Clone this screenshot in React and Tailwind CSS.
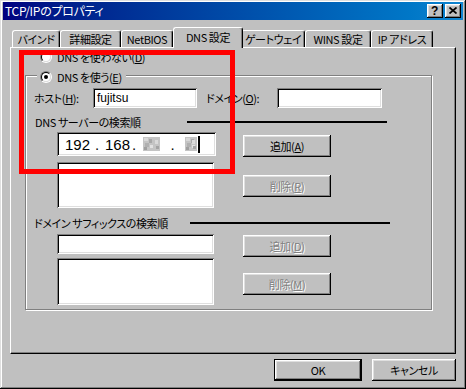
import React from "react";

const RAISED =
  "shadow-[inset_-1px_-1px_0_#000,inset_1px_1px_0_#fff,inset_-2px_-2px_0_#808080,inset_2px_2px_0_#dfdfdf]";
const SUNKEN =
  "shadow-[inset_1px_1px_0_#808080,inset_-1px_-1px_0_#fff,inset_2px_2px_0_#000,inset_-2px_-2px_0_#dfdfdf]";

function U({ children }) {
  return <span className="underline underline-offset-[1px]">{children}</span>;
}

function Radio({ checked }) {
  return (
    <div className="w-[12px] h-[12px] shrink-0 rounded-full border border-t-[#808080] border-l-[#808080] border-b-white border-r-white">
      <div className="w-full h-full rounded-full border border-t-black border-l-black border-b-[#dfdfdf] border-r-[#dfdfdf] bg-white flex items-center justify-center">
        {checked && <div className="w-[4px] h-[4px] rounded-full bg-black" />}
      </div>
    </div>
  );
}

function Btn({ children, disabled, className }) {
  return (
    <div
      className={
        "flex items-center justify-center bg-[#c0c0c0] leading-none " +
        RAISED +
        " " +
        (disabled
          ? "text-[#808080] [text-shadow:1px_1px_0_#fff] "
          : "text-black ") +
        className
      }
    >
      {children}
    </div>
  );
}

function Field({ className, children }) {
  return <div className={"bg-white " + SUNKEN + " " + className}>{children}</div>;
}

function Tab({ children, className }) {
  return (
    <div
      className={
        "h-[17px] bg-[#c0c0c0] border-l border-t border-r border-l-white border-t-white border-r-black rounded-t-[3px] shadow-[inset_-1px_0_0_#808080] flex items-center justify-center leading-none " +
        className
      }
    >
      {children}
    </div>
  );
}

function Mosaic({ w }) {
  return (
    <svg width={w} height="14" viewBox={`0 0 ${w} 14`} className="block">
      <rect x="0" y="0" width={w} height="14" fill="#c4c4c4" />
      <rect x="1" y="1" width="4" height="3" fill="#d8d8d8" />
      <rect x="6" y="2" width="3" height="4" fill="#a8a8a8" />
      <rect x="2" y="6" width="4" height="4" fill="#b0b0b0" />
      <rect x="7" y="8" width="3" height="3" fill="#e2e2e2" />
      <rect x="1" y="10" width="3" height="3" fill="#a0a0a0" />
      <rect x={w - 5} y="3" width="3" height="4" fill="#dadada" />
      <rect x={w - 4} y="9" width="3" height="3" fill="#a4a4a4" />
    </svg>
  );
}

export default function App() {
  return (
    <div
      className={
        "relative w-[466px] h-[389px] bg-[#c0c0c0] px-[3px] pt-[2px] flex flex-col text-black whitespace-nowrap font-['MS_UI_Gothic','Noto_Sans_CJK_JP',sans-serif] [font-feature-settings:'palt'] text-[11px] tracking-[-0.4px] leading-none overflow-hidden shadow-[inset_-1px_-1px_0_#000,inset_1px_1px_0_#dfdfdf,inset_-2px_-2px_0_#808080,inset_2px_2px_0_#fff]"
      }
    >
      {/* Title bar */}
      <div className="h-[18px] bg-linear-to-r from-[#000080] to-[#1084d0] flex items-center pl-[2px] pr-[2px]">
        <span className="text-white text-[12px] tracking-[-0.3px]">TCP/IPのプロパティ</span>
        <div className="ml-auto flex gap-[2px]">
          <div className={"w-[16px] h-[14px] bg-[#c0c0c0] flex items-center justify-center " + RAISED}>
            <span className="font-['Liberation_Sans',sans-serif] font-bold text-[12px] leading-none pr-[1px]">?</span>
          </div>
          <div className={"w-[16px] h-[14px] bg-[#c0c0c0] flex items-center justify-center " + RAISED}>
            <svg width="8" height="7" viewBox="0 0 8 7" className="block -mt-[1px]">
              <path d="M0.5 0.5L7.5 6.5M7.5 0.5L0.5 6.5" stroke="#000" strokeWidth="1.7" />
            </svg>
          </div>
        </div>
      </div>

      <div className="mx-[7px] mt-[7px] flex flex-col">
        {/* Tabs */}
        <div className="h-[20px] flex items-end pl-[2px]">
          <Tab className="w-[48px]">バインド</Tab>
          <Tab className="w-[61px]">詳細設定</Tab>
          <Tab className="w-[52px]">NetBIOS</Tab>
          <div className="relative z-10 w-[70px] h-[21px] -mb-[1px] bg-[#c0c0c0] border-l border-t border-r border-l-white border-t-white border-r-black rounded-t-[3px] shadow-[inset_-1px_0_0_#808080] flex items-center justify-center pb-[2px] leading-none">
            DNS 設定
          </div>
          <Tab className="w-[64px] -ml-[2px]">ゲートウェイ</Tab>
          <Tab className="w-[66px]">WINS 設定</Tab>
          <Tab className="w-[62px]">IP アドレス</Tab>
        </div>

        {/* Panel */}
        <div className="h-[307px] border border-t-white border-l-white border-r-black border-b-black shadow-[inset_-1px_-1px_0_#808080] flex flex-col">
          <div className="mt-[3px] ml-[29px] flex items-center h-[12px]">
            <Radio />
            <span className="ml-[5px]">
              DNS を使わない(<U>D</U>)
            </span>
          </div>

          {/* Group */}
          <div className="relative mt-[12px] ml-[14px] w-[407px] h-[235px] border border-[#808080] shadow-[1px_1px_0_#fff,inset_1px_1px_0_#fff] flex flex-col">
            <div className="absolute -top-[5px] left-[11px] px-[3px] bg-[#c0c0c0] flex items-center h-[12px]">
              <Radio checked />
              <span className="ml-[5px] mr-[1px]">
                DNS を使う(<U>E</U>)
              </span>
            </div>

            {/* Host / Domain */}
            <div className="mt-[12px] h-[20px] flex items-center">
              <span className="ml-[8px] w-[59px]">
                ホスト(<U>H</U>):
              </span>
              <Field className="w-[104px] h-[20px] flex items-center pl-[4px]">
                <span className="font-['Liberation_Sans','Noto_Sans_CJK_JP',sans-serif] text-[12px] tracking-normal -mt-[1px]">fujitsu</span>
              </Field>
              <span className="ml-[9px] w-[71px]">
                ドメイン(<U>O</U>):
              </span>
              <Field className="w-[105px] h-[20px]" />
            </div>

            {/* DNS server order */}
            <div className="mt-[7px] h-[14px] flex items-center">
              <span className="ml-[9px] w-[152px]">DNS サーバーの検索順</span>
              <div className="w-[200px] h-[2px] bg-black" />
            </div>

            <div className="mt-[3px] flex items-start">
              <Field className="ml-[31px] w-[159px] h-[24px] flex items-center pl-[8px]">
                <div className="flex items-center font-['Liberation_Sans',sans-serif] text-[15px] tracking-normal leading-none">
                  <span className="w-[24px]">192</span>
                  <span className="w-[16px] text-center">.</span>
                  <span className="w-[24px]">168</span>
                  <span className="w-[10px] text-center">.</span>
                  <span className="ml-[4px]">
                    <Mosaic w={17} />
                  </span>
                  <span className="w-[25px] text-center">.</span>
                  <Mosaic w={12} />
                  <div className="ml-[1px] w-[2px] h-[17px] bg-black" />
                </div>
              </Field>
              <Btn className="ml-[27px] mt-[3px] w-[88px] h-[22px]">
                <span>
                  追加(<U>A</U>)
                </span>
              </Btn>
            </div>

            <div className="mt-[5px] flex items-start">
              <Field className="ml-[31px] w-[157px] h-[46px]" />
              <Btn disabled className="ml-[29px] mt-[13px] w-[88px] h-[22px]">
                <span>
                  削除(<U>R</U>)
                </span>
              </Btn>
            </div>

            {/* Domain suffix */}
            <div className="mt-[8px] h-[14px] flex items-center">
              <span className="ml-[8px] w-[156px]">ドメイン サフィックスの検索順</span>
              <div className="w-[200px] h-[2px] bg-black" />
            </div>

            <div className="mt-[4px] flex items-start">
              <Field className="ml-[31px] w-[157px] h-[20px]" />
              <Btn disabled className="ml-[29px] mt-[1px] w-[88px] h-[22px]">
                <span>
                  追加(<U>D</U>)
                </span>
              </Btn>
            </div>

            <div className="mt-[1px] flex items-start">
              <Field className="ml-[31px] w-[157px] h-[47px]" />
              <Btn disabled className="ml-[29px] mt-[15px] w-[88px] h-[22px]">
                <span>
                  削除(<U>M</U>)
                </span>
              </Btn>
            </div>
          </div>
        </div>

        {/* Bottom buttons */}
        <div className="mt-[5px] flex justify-end gap-[10px]">
          <div className="w-[88px] h-[22px] border border-black">
            <Btn className="w-full h-full">OK</Btn>
          </div>
          <Btn className="w-[84px] h-[22px]">キャンセル</Btn>
        </div>
      </div>

      {/* Red highlight overlay */}
      <div className="absolute left-[19px] top-[50px] w-[216px] h-[124px] border-[5px] border-[#ff0000] pointer-events-none" />
    </div>
  );
}
